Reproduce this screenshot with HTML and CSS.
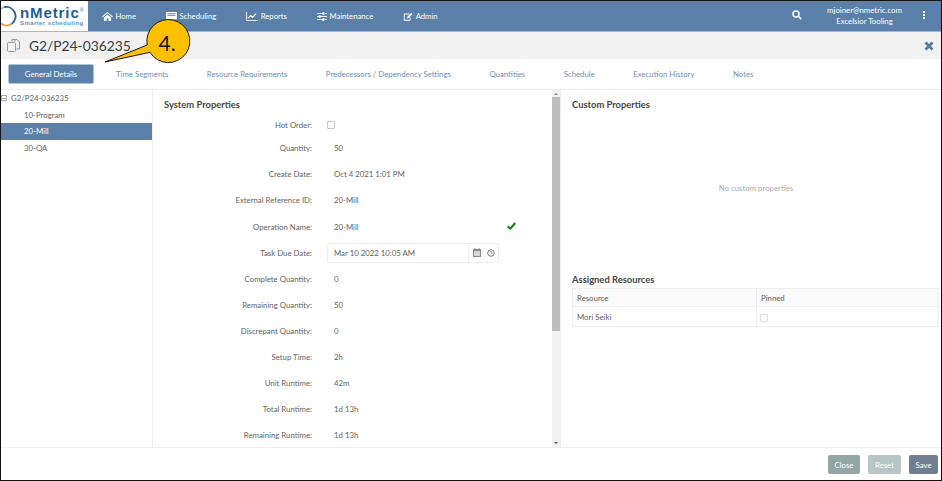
FILE: index.html
```html
<!DOCTYPE html>
<html lang="en">
<head>
<meta charset="utf-8">
<title>nMetric</title>
<link rel="stylesheet" href="styles.css">
</head>
<body>
<div class="frame">
  <header class="topbar">
    <div class="logo">
      <svg class="logo-mark" width="16" height="22" viewBox="0 0 16 22"><path d="M3 2.200A9.300 9.300 0 0 1 13.500 7a9.300 9.300 0 0 1-3 12" fill="none" stroke="#2a5f92" stroke-width="1.800"/><path d="M10.500 19A9.300 9.300 0 0 1 0 18.500" fill="none" stroke="#ef9a4a" stroke-width="1.800"/><path d="M3 2.200A9.300 9.300 0 0 0 0 3.800" fill="none" stroke="#8fb7d6" stroke-width="1.800"/></svg>
      <div class="logo-text"><div class="logo-name">nMetric<sup class="reg">®</sup></div><div class="logo-tag">Smarter scheduling</div></div>
    </div>
    <nav class="nav">
      <a class="nav-item"><svg width="11" height="9" viewBox="0 0 12 10"><path d="M6 0 0 5l.7.8L6 1.500l5.300 4.300.7-.8zM2 6v4h3V7h2v3h3V6L6 2.700z" fill="#fff"/></svg>Home</a>
      <a class="nav-item"><svg width="11" height="9" viewBox="0 0 12 10"><path d="M0 0h12v8H0zM1.500 1.500v1h9v-1zm0 2v1h9v-1z" fill="#fff" fill-rule="evenodd"/><path d="M3 9h6v1H3z" fill="#fff"/></svg>Scheduling</a>
      <a class="nav-item"><svg width="12" height="9" viewBox="0 0 13 10"><path d="M.5 0v9.500H13" fill="none" stroke="#fff"/><path d="m2 7 3-3 2 2 4-4" fill="none" stroke="#fff" stroke-width="1.400"/></svg>Reports</a>
      <a class="nav-item"><svg width="10" height="9" viewBox="0 0 11 10"><path d="M0 1h11v1H0zM0 4.500h11v1H0zM0 8h11v1H0z" fill="#fff"/><path d="M6 0h2v3H6zM2 3.500h2v3H2zM6 7h2v3H6z" fill="#fff"/></svg>Maintenance</a>
      <a class="nav-item"><svg width="10" height="9" viewBox="0 0 12 10"><path d="M1 1.500h7v1H2V9h6V6h1v4H1z" fill="#fff"/><path d="M5 5.500 10 .5l1.500 1.500-5 5H5z" fill="#fff"/></svg>Admin</a>
    </nav>
    <svg class="search" width="10" height="10" viewBox="0 0 10 10"><circle cx="4" cy="4" r="3" fill="none" stroke="#fff" stroke-width="1.500"/><path d="m6.200 6.200 3 3" stroke="#fff" stroke-width="1.800"/></svg>
    <div class="user"><div>mjoiner@nmetric.com</div><div>Excelsior Tooling</div></div>
    <div class="kebab"><i></i><i></i><i></i></div>
  </header>

  <div class="titlebar">
    <svg class="copy" width="13" height="13" viewBox="0 0 13 13"><path d="M5 2.500V.5h3v2M8 .5h2l2.500 2.500v7H9.500" fill="none" stroke="#999"/><rect x=".5" y="3.500" width="8" height="9" rx="1" fill="#f1f1f1" stroke="#999"/></svg>
    <h1 class="title">G2/P24-036235</h1>
    <svg class="close-x" width="10" height="10" viewBox="0 0 10 10"><path d="M1.500 1.500l7 7M8.500 1.500l-7 7" stroke="#4f78a3" stroke-width="2.600"/></svg>
  </div>

  <div class="tabs">
    <a class="tab tab-active">General Details</a>
    <a class="tab">Time Segments</a>
    <a class="tab">Resource Requirements</a>
    <a class="tab">Predecessors / Dependency Settings</a>
    <a class="tab">Quantities</a>
    <a class="tab">Schedule</a>
    <a class="tab">Execution History</a>
    <a class="tab">Notes</a>
  </div>

  <main class="body">
    <aside class="tree">
      <div class="tree-root"><span class="minus"></span>G2/P24-036235</div>
      <div class="tree-item">10-Program</div>
      <div class="tree-item tree-sel">20-Mill</div>
      <div class="tree-item">30-QA</div>
    </aside>
    <section class="sys">
      <div class="sys-scroll">
        <h2 class="head sys-head">System Properties</h2>
        <div class="props">
          <div class="row r-a"><label>Hot Order:</label><span class="check check-hot"></span></div>
          <div class="row r-b"><label>Quantity:</label><span>50</span></div>
          <div class="row"><label>Create Date:</label><span>Oct 4 2021 1:01 PM</span></div>
          <div class="row"><label>External Reference ID:</label><span>20-Mill</span></div>
          <div class="row"><label>Operation Name:</label><span>20-Mill</span>
            <svg class="ok" width="9" height="8" viewBox="0 0 9 8"><path d="M.8 4.200 3.300 6.600 8.200 1" fill="none" stroke="#0f7d0f" stroke-width="2"/></svg></div>
          <div class="row r-date"><label>Task Due Date:</label>
            <div class="datebox"><span class="dateval">Mar 10 2022 10:05 AM</span>
              <span class="dateicons">
                <svg width="8" height="9" viewBox="0 0 8 9"><path d="M0 1h8v8H0z" fill="#8a8a8a"/><path d="M1 3h6v5H1z" fill="#d5d5d5"/><path d="M1.500 0h1v2h-1zM5.500 0h1v2h-1z" fill="#8a8a8a"/></svg>
                <svg width="8" height="8" viewBox="0 0 8 8"><circle cx="4" cy="4" r="3.300" fill="none" stroke="#777"/><path d="M4 2v2.300h1.600" fill="none" stroke="#777" stroke-width=".8"/></svg>
              </span>
            </div></div>
          <div class="row"><label>Complete Quantity:</label><span>0</span></div>
          <div class="row"><label>Remaining Quantity:</label><span>50</span></div>
          <div class="row"><label>Discrepant Quantity:</label><span>0</span></div>
          <div class="row"><label>Setup Time:</label><span>2h</span></div>
          <div class="row"><label>Unit Runtime:</label><span>42m</span></div>
          <div class="row"><label>Total Runtime:</label><span>1d 13h</span></div>
          <div class="row"><label>Remaining Runtime:</label><span>1d 13h</span></div>
        </div>
      </div>
      <div class="scrollbar"><span class="arrow-up"></span><span class="thumb"></span><span class="arrow-down"></span></div>
    </section>
    <section class="custom">
      <h2 class="head">Custom Properties</h2>
      <div class="empty">No custom properties</div>
      <h2 class="head assigned">Assigned Resources</h2>
      <table class="res">
        <thead><tr><th class="c1">Resource</th><th>Pinned</th></tr></thead>
        <tbody><tr><td class="c1">Mori Seiki</td><td><span class="check check-light"></span></td></tr></tbody>
      </table>
    </section>
  </main>

  <footer class="footer">
    <button class="btn btn-close">Close</button>
    <button class="btn btn-reset">Reset</button>
    <button class="btn btn-save">Save</button>
  </footer>

  <svg class="callout" width="100" height="56" viewBox="0 0 100 56">
    <path d="M5 47 L47.200 30 A21.500 21.500 0 1 1 50 37.300 Z" fill="#ffc000" stroke="#1a1a1a" stroke-width="1"/>
    <text x="58.500" y="36" class="callout-num">4.</text>
  </svg>
</div>
</body>
</html>
```
FILE: styles.css
```css
* { box-sizing: border-box; }
html, body { margin: 0; padding: 0; height: 100%; }
body { font-family: Lato, "Open Sans", sans-serif; color: #5f5f5f; font-size: 8px; background: #fff; }
.frame { position: relative; width: 942px; height: 481px; border: 1px solid #111; display: flex; flex-direction: column; overflow: hidden; }

.topbar { height: 31px; background: #5a7fa9; display: flex; align-items: center; color: #fff; flex: none; border-bottom: 1px solid #9dbbd6; }
.logo { width: 87px; height: 30px; background: #fff; display: flex; align-items: center; flex: none; }
.logo-mark { flex: none; margin-top: -1px; }
.logo-text { margin-left: 3px; }
.logo-name { font-family: "Liberation Sans", Arial, sans-serif; font-weight: 700; font-size: 15px; letter-spacing: .9px; color: #1f5f96; line-height: 14px; white-space: nowrap; }
.reg { font-size: 5px; vertical-align: top; line-height: 8px; font-weight: 400; letter-spacing: 0; }
.logo-tag { font-family: "Liberation Sans", Arial, sans-serif; font-weight: 700; font-size: 6px; color: #5b93bd; line-height: 7px; letter-spacing: .42px; white-space: nowrap; }
.nav { display: flex; align-items: center; gap: 30px; margin-left: 14px; flex: 1; }
.nav-item { display: flex; align-items: center; gap: 2.500px; font-size: 7.700px; color: #fff; }
.search { flex: none; margin-right: 20px; margin-top: -2px; }
.user { width: 85px; text-align: center; font-size: 7.800px; line-height: 11px; flex: none; margin-top: -1px; }
.kebab { width: 34px; flex: none; display: flex; flex-direction: column; align-items: center; gap: 1px; margin-top: -2px; }
.kebab i { width: 2px; height: 2px; background: #fff; display: block; }

.titlebar { height: 27px; background: #f1f1f1; display: flex; align-items: center; flex: none; padding: 0 7px 0 6px; }
.copy { flex: none; }
.title { font-size: 13.800px; font-weight: 400; margin: 0 0 0 9px; color: #3c3c3c; flex: 1; }
.close-x { flex: none; }

.tabs { height: 31px; flex: none; display: flex; align-items: center; gap: 38.500px; border-bottom: 1px solid #eee; padding-left: 7px; }
.tab { font-size: 7.800px; color: #6f8fb2; white-space: nowrap; }
.tab-active { width: 86px; height: 20px; margin-right: -16.500px; background: #5a7fa9; color: #fff; border-radius: 2px; display: flex; align-items: center; justify-content: center; border: 1px solid #a9c3db; }

.body { flex: 1; display: flex; min-height: 0; }
.tree { width: 152px; flex: none; border-right: 1px solid #eee; font-size: 7.800px; }
.tree-root { height: 16.400px; display: flex; align-items: center; }
.minus { width: 6px; height: 6px; border: 1px solid #aaa; margin-right: 4px; display: flex; align-items: center; justify-content: center; }
.minus::before { content: ""; width: 4px; height: 1px; background: #aaa; }
.tree-item { height: 16.600px; display: flex; align-items: center; padding-left: 23px; }
.tree-sel { background: #5a7fa9; color: #fff; }

.sys { width: 408px; flex: none; display: flex; border-right: 1px solid #eee; }
.sys-scroll { flex: 1; min-width: 0; overflow: hidden; padding-left: 11px; }
.head { font-size: 9.400px; font-weight: 700; color: #444; margin: 0; line-height: 13px; }
.sys-head { padding-top: 8px; }
.props { display: flex; flex-direction: column; margin-top: 4px; }
.row { display: flex; align-items: center; height: 26.100px; font-size: 7.800px; position: relative; }
.r-a { height: 20px; }
.r-b { height: 26.300px; }
.row label { width: 148px; text-align: right; margin-right: 22px; flex: none; }
.check { width: 8px; height: 8px; border: 1px solid #c8c8c8; border-radius: 1px; display: inline-block; background: #fff; }
.check-hot { margin-left: -7px; }
.check-light { border-color: #ddd; margin-top: 2px; display: block; margin-left: -1px; }
.ok { position: absolute; left: 343px; top: 9px; }
.datebox { width: 172px; height: 20px; border: 1px solid #eee; border-radius: 2px; display: flex; align-items: center; margin-left: -7px; }
.dateval { flex: 1; padding-left: 6px; border-right: 1px solid #eee; height: 18px; display: flex; align-items: center; }
.dateicons { width: 29px; display: flex; align-items: center; justify-content: center; gap: 6px; flex: none; }
.scrollbar { width: 8px; flex: none; background: #f1f1f1; display: flex; flex-direction: column; align-items: center; }
.arrow-up { height: 0; flex: none; width: 0; border-left: 2px solid transparent; border-right: 2px solid transparent; border-bottom: 2px solid #888; margin-top: 3px; margin-bottom: 2px; }
.thumb { height: 234px; width: 100%; background: #bdbdbd; flex: none; }
.arrow-down { width: 0; border-left: 2px solid transparent; border-right: 2px solid transparent; border-top: 2px solid #555; margin-top: auto; margin-bottom: 3px; }

.custom { flex: 1; padding: 8px 1px 0 11px; min-width: 0; }
.empty { text-align: center; color: #aaa; font-size: 7.800px; margin-top: 72px; height: 90px; line-height: 11px; }
.assigned { margin-bottom: 2px; }
.res { width: 367px; border-collapse: collapse; font-size: 7.800px; }
.res th, .res td { border: 1px solid #eee; text-align: left; font-weight: 400; padding: 0 4px; }
.res th { height: 18px; background: #fafafa; }
.res td { height: 20px; }
.res .c1 { width: 184px; }

.footer { height: 33px; flex: none; border-top: 1px solid #f0f0f0; display: flex; align-items: center; justify-content: flex-end; padding-right: 3px; gap: 8px; padding-top: 1px; }
.btn { height: 19px; border: 0; border-radius: 2px; color: #fff; font-family: inherit; font-size: 7.800px; padding: 0; }
.btn-close { width: 32px; background: #93a6a6; }
.btn-reset { width: 33px; background: #b7c5c5; }
.btn-save { width: 29px; background: #6f7f90; }

.callout { position: absolute; left: 99px; top: 14px; }
.callout-num { font-family: Lato, sans-serif; font-size: 21px; fill: #111; }
```
